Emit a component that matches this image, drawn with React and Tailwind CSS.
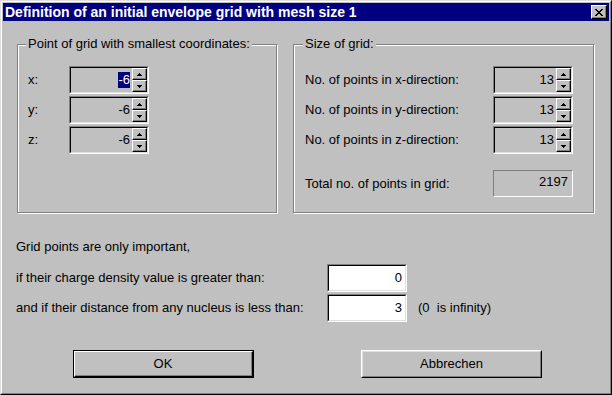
import React from "react";

const Sunken = ({ children, className = "" }) => (
  <div
    className={`border border-t-[#808080] border-l-[#808080] border-b-white border-r-white ${className}`}
  >
    <div className="h-full border border-t-black border-l-black border-b-[#dfdfdf] border-r-[#dfdfdf]">
      {children}
    </div>
  </div>
);

const Arrow = ({ up }) => (
  <svg width="5" height="3" viewBox="0 0 5 3" shapeRendering="crispEdges">
    <polygon points={up ? "2.5,0 5,3 0,3" : "0,0 5,0 2.5,3"} fill="#000" />
  </svg>
);

const SpinButton = ({ up }) => (
  <div className="h-[12px] flex items-center justify-center border border-t-white border-l-white border-b-black border-r-black shadow-[inset_-1px_-1px_0_#808080] bg-[#c0c0c0]">
    <Arrow up={up} />
  </div>
);

const SpinField = ({ value, selected }) => (
  <Sunken className="w-[80px] h-[28px] bg-[#c0c0c0]">
    <div className="flex h-full">
      <div className="flex-1 flex items-center justify-end pr-[2px]">
        <span
          className={
            selected
              ? "bg-[#000080] text-white leading-[16px]"
              : "leading-[16px]"
          }
        >
          {value}
        </span>
      </div>
      <div className="flex flex-col w-[15px]">
        <SpinButton up />
        <SpinButton />
      </div>
    </div>
  </Sunken>
);

const GroupBox = ({ title, className = "", labelClass = "", children }) => (
  <div
    className={`relative border border-[#808080] shadow-[inset_1px_1px_0_white,1px_1px_0_white] ${className}`}
  >
    <span
      className={`absolute top-[-9px] px-[2px] bg-[#c0c0c0] leading-[16px] ${labelClass}`}
    >
      {title}
    </span>
    {children}
  </div>
);

const Button = ({ children, isDefault }) =>
  isDefault ? (
    <div className="w-[181px] h-[28px] border border-black">
      <div className="h-full border border-t-white border-l-white border-b-black border-r-black">
        <div className="h-full flex items-center justify-center border-r border-b border-[#808080]">
          {children}
        </div>
      </div>
    </div>
  ) : (
    <div className="w-[181px] h-[28px] border border-t-white border-l-white border-b-black border-r-black">
      <div className="h-full flex items-center justify-center border border-t-[#dfdfdf] border-l-[#dfdfdf] border-b-[#808080] border-r-[#808080]">
        {children}
      </div>
    </div>
  );

export default function App() {
  const coords = [
    { label: "x:", value: "-6", selected: true },
    { label: "y:", value: "-6" },
    { label: "z:", value: "-6" },
  ];
  const sizes = ["x", "y", "z"];

  return (
    <div className="w-[612px] h-[395px] bg-[#c0c0c0] border border-t-[#dfdfdf] border-l-[#dfdfdf] border-b-black border-r-black font-['Liberation_Sans',Arial,sans-serif] text-[13px] text-black">
      <div className="h-full border border-t-white border-l-white border-b-[#808080] border-r-[#808080] p-[1px] flex flex-col">
        {/* title bar */}
        <div className="h-[18px] bg-[#000080] flex items-center justify-between pl-[2px] pr-[2px]">
          <span className="text-white font-bold text-[14px] leading-[18px]">
            Definition of an initial envelope grid with mesh size 1
          </span>
          <div className="w-[16px] h-[14px] flex items-center justify-center bg-[#c0c0c0] border border-t-white border-l-white border-b-black border-r-black shadow-[inset_-1px_-1px_0_#808080]">
            <svg width="8" height="7" viewBox="0 0 8 7" shapeRendering="crispEdges">
              <path
                d="M0 0h2v1h-2zM6 0h2v1h-2zM1 1h2v1h-2zM5 1h2v1h-2zM2 2h4v1h-4zM3 3h2v1h-2zM2 4h4v1h-4zM1 5h2v1h-2zM5 5h2v1h-2zM0 6h2v1h-2zM6 6h2v1h-2z"
                fill="#000"
              />
            </svg>
          </div>
        </div>

        {/* group boxes */}
        <div className="flex mt-[23px] ml-[14px]">
          <GroupBox
            title="Point of grid with smallest coordinates:"
            className="w-[260px] h-[169px]"
            labelClass="left-[8px]"
          >
            <div className="flex flex-col gap-[2px] pt-[21px] pl-[10px]">
              {coords.map((c) => (
                <div key={c.label} className="flex items-center">
                  <span className="w-[41px]">{c.label}</span>
                  <SpinField value={c.value} selected={c.selected} />
                </div>
              ))}
            </div>
          </GroupBox>

          <GroupBox
            title="Size of grid:"
            className="w-[301px] h-[169px] ml-[16px]"
            labelClass="left-[9px]"
          >
            <div className="flex flex-col gap-[2px] pt-[21px] pl-[11px] pr-[20px]">
              {sizes.map((d) => (
                <div key={d} className="flex items-center justify-between">
                  <span>No. of points in {d}-direction:</span>
                  <SpinField value="13" />
                </div>
              ))}
              <div className="flex items-center justify-between mt-[14px]">
                <span>Total no. of points in grid:</span>
                <div className="w-[80px] h-[27px] border border-t-[#808080] border-l-[#808080] border-b-white border-r-white flex items-center justify-end pr-[4px] pb-[3px]">
                  2197
                </div>
              </div>
            </div>
          </GroupBox>
        </div>

        {/* thresholds */}
        <div className="flex flex-col pl-[13px] mt-[26px]">
          <div className="leading-[16px]">Grid points are only important,</div>
          <div className="flex items-center mt-[9px]">
            <span className="w-[311px]">
              if their charge density value is greater than:
            </span>
            <Sunken className="w-[80px] h-[28px] bg-white">
              <div className="h-full flex items-center justify-end pr-[3px]">0</div>
            </Sunken>
          </div>
          <div className="flex items-center mt-[2px]">
            <span className="w-[311px]">
              and if their distance from any nucleus is less than:
            </span>
            <Sunken className="w-[80px] h-[28px] bg-white">
              <div className="h-full flex items-center justify-end pr-[3px]">3</div>
            </Sunken>
            <span className="ml-[11px]">(0&nbsp; is infinity)</span>
          </div>
        </div>

        {/* buttons */}
        <div className="flex mt-[28px] pl-[70px] gap-[107px]">
          <Button isDefault>OK</Button>
          <Button>Abbrechen</Button>
        </div>
      </div>
    </div>
  );
}
